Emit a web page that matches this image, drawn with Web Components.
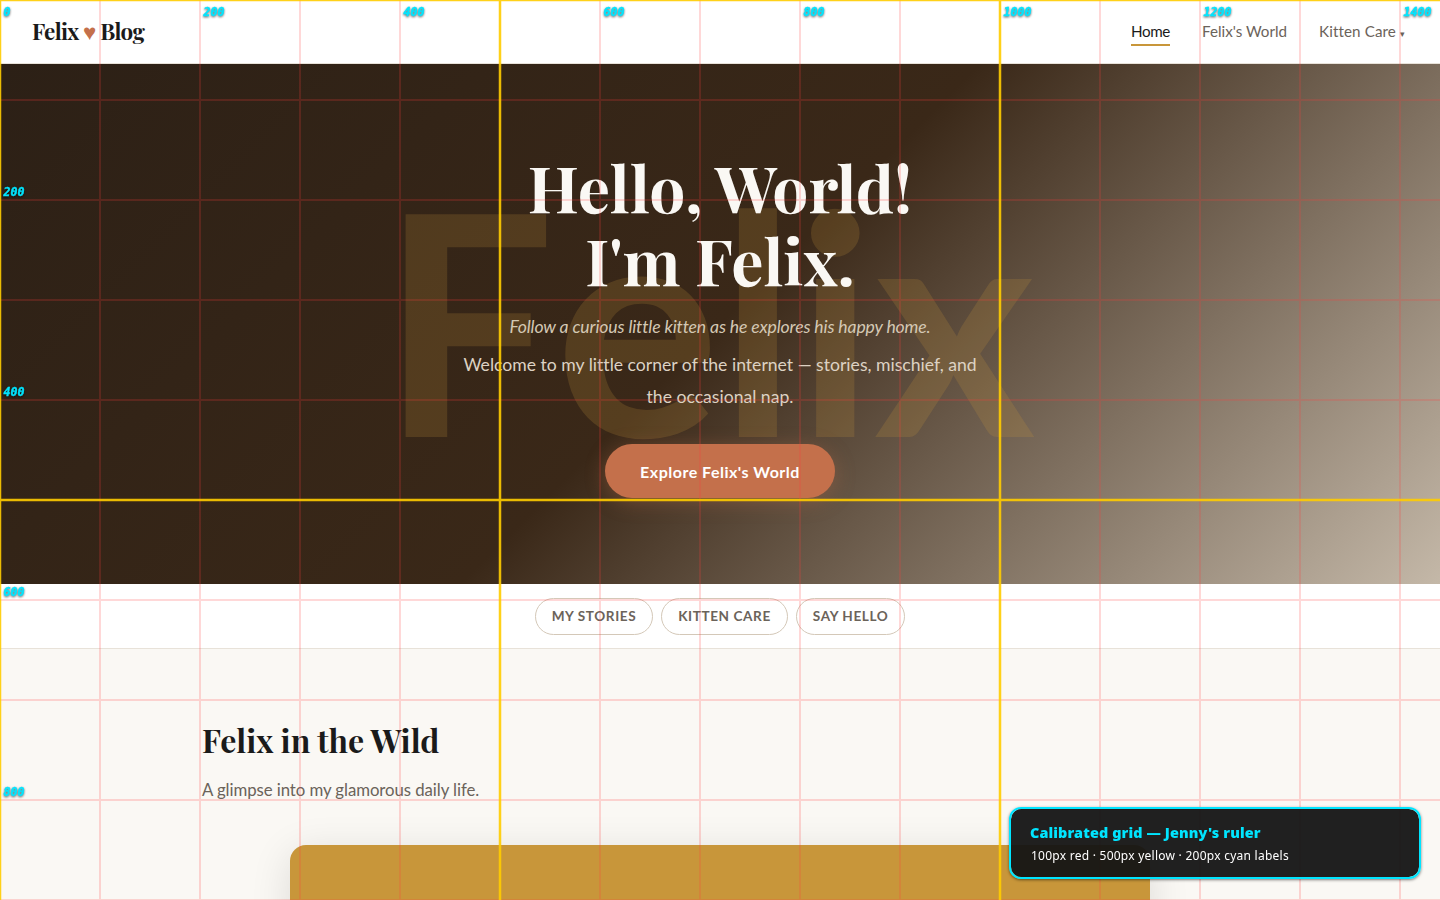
<!DOCTYPE html>
<html lang="en"><head><meta charset="utf-8"><title>Felix Blog</title>
<style>html,body{margin:0;height:900px;overflow:hidden;background:#faf8f4}body{font-family:Lato,sans-serif;color:#1a1a1a;text-rendering:optimizeSpeed;font-variant-ligatures:none}</style></head>
<body><felix-page></felix-page><grid-ruler></grid-ruler>
<script>
const define=(name,html)=>customElements.define(name,class extends HTMLElement{
  constructor(){super();this.attachShadow({mode:'open'}).innerHTML=html;}
});
define('site-header',`<style>
:host{display:flex;box-sizing:border-box;height:64px;padding:0 32px;align-items:center;justify-content:space-between;background:#fff;border-bottom:1px solid #e8e2d9}
.logo{font:700 22.4px/30px "Playfair Display","Liberation Serif",serif;letter-spacing:-.66px;white-space:nowrap;padding-bottom:1px}.logo i{font-style:normal;color:#c4704b}
nav{display:flex;gap:32px;font-size:15.2px;line-height:23px;color:#6b635a}
nav span{white-space:nowrap;width:85px;height:24px}nav span:last-child{width:89px;letter-spacing:.1px}nav .on{width:39px;color:#1a1a1a;box-shadow:0 2px #c8963a;letter-spacing:-.4px}small{font-size:9px}
</style><div class="logo">Felix <i>♥</i> Blog</div><nav><span class="on">Home</span><span>Felix's World</span><span>Kitten Care <small>▾</small></span></nav>`);
define('hero-banner',`<style>
:host{display:flex;position:relative;box-sizing:border-box;height:520px;overflow:hidden;flex-direction:column;align-items:center;padding-top:86px;text-align:center;background:linear-gradient(135deg,#2c2016 0%,#3a2818 50%,#c4b8a8 100%)}
:host>*{position:relative}
.mark{position:absolute;inset:0 24px 12px 0;display:grid;place-items:center;font-size:308px;font-weight:700;line-height:1;font-kerning:none;color:rgba(200,150,58,.2)}
h1{margin:0;font:700 64px/73px "Playfair Display","Liberation Serif",serif;letter-spacing:-.1px;color:#faf8f4}
.tag{margin:17px 0 0;font-size:17.6px;line-height:28px;font-style:italic;letter-spacing:-.13px;color:#d4c8b4}
.copy{margin:8px 0 0;width:520px;font-size:17.6px;line-height:32px;color:#ddd2c3}
a{margin-top:31px;box-sizing:border-box;width:230px;height:54px;border-radius:27px;background:#c4704b;color:#fff;font-size:16px;line-height:56px;font-weight:700;letter-spacing:.5px;box-shadow:0 4px 20px rgba(196,112,75,.35)}
</style><div class="mark">Felix</div><h1>Hello, World!<br>I'm Felix.</h1><p class="tag">Follow a curious little kitten as he explores his happy home.</p><p class="copy">Welcome to my little corner of the internet — stories, mischief, and the occasional nap.</p><a>Explore Felix's World</a>`);
define('chip-link',`<style>:host{display:block;border:1px solid #d4c8b8;border-radius:20px;padding:0 16px;height:35px;line-height:35px;font-size:13.6px;font-weight:700;letter-spacing:.58px;color:#6b635a;white-space:nowrap}</style><slot></slot>`);
define('chip-bar',`<style>:host{display:flex;box-sizing:border-box;height:65px;padding-top:14px;justify-content:center;align-items:flex-start;gap:8px;background:#fff;border-bottom:1px solid #e8e2d9}</style><slot></slot>`);
define('wild-section',`<style>:host{display:block;padding:67px 202px 0}h2{margin:0;font:700 32px/48px "Playfair Display","Liberation Serif",serif}p{margin:12px 0 0;font-size:16.8px;line-height:28px;letter-spacing:-.07px;color:#6b635a}.card{margin:41px auto 0;width:860px;height:480px;border-radius:16px;background:#c8963a;box-shadow:0 8px 40px rgba(0,0,0,.12)}</style><h2>Felix in the Wild</h2><p>A glimpse into my glamorous daily life.</p><div class="card"></div>`);
define('felix-page',`<style>:host{display:block;height:900px;overflow:hidden}</style><site-header></site-header><hero-banner></hero-banner><chip-bar><chip-link>MY STORIES</chip-link><chip-link>KITTEN CARE</chip-link><chip-link>SAY HELLO</chip-link></chip-bar><wild-section></wild-section>`);

// Measuring overlay: red every 100px, yellow every 500px, cyan labels every 200px.
customElements.define('grid-ruler',class extends HTMLElement{
  constructor(){
    super();
    let red='',gold='',labels='';
    const add=(d,n)=>{n%500?red+=d:gold+=d};
    for(let x=0;x<=1400;x+=100)add(`M${x} 0V900`,x);
    for(let y=0;y<=900;y+=100)add(`M0 ${y}H1440`,y);
    for(let x=0;x<=1400;x+=200)labels+=`<text x="${x+3.5}" y="15.5">${x}</text>`;
    for(let y=200;y<=800;y+=200)labels+=`<text x="3.5" y="${y-4}">${y}</text>`;
    this.attachShadow({mode:'open'}).innerHTML=`<style>
:host{position:fixed;inset:0;display:block;pointer-events:none}svg{display:block}
path{fill:none}.labels{font:italic 700 11.6px "DejaVu Sans Mono",monospace;fill:#00e5ff;stroke:#00e5ff;stroke-width:.4;filter:drop-shadow(0 1px 1px rgba(0,0,0,.6))}
.note{position:absolute;right:19px;bottom:21px;box-sizing:border-box;width:412px;height:72px;padding:13px 19px;border:2px solid #00e5ff;border-radius:12px;background:rgba(20,20,20,.95);background-clip:padding-box;box-shadow:0 1px 3px rgba(0,0,0,.5);font-family:"Noto Sans","Open Sans",sans-serif;white-space:nowrap}
b{display:block;font-size:14.4px;line-height:22px;font-weight:900;letter-spacing:.12px;color:#00e5ff}.note span{display:block;font-size:12px;line-height:23px;letter-spacing:.25px;padding-left:1px;color:#fff}
</style><svg width="1440" height="900"><path d="${red}" stroke="#ff3b3b" stroke-opacity=".2" stroke-width="2"/><path d="${gold}" stroke="#ffcc00" stroke-opacity=".9" stroke-width="2.5"/><g class="labels">${labels}</g></svg>
<div class="note"><b>Calibrated grid — Jenny's ruler</b><span>100px red · 500px yellow · 200px cyan labels</span></div>`;
  }
});
</script></body></html>
